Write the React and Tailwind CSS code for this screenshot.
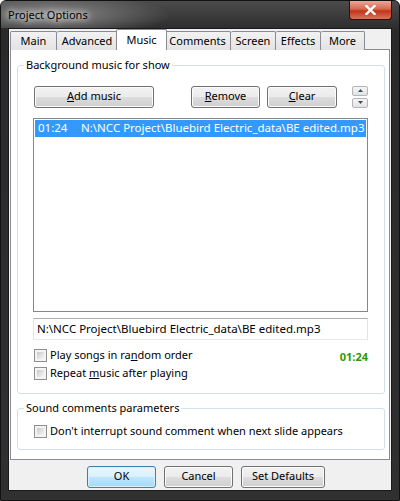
import React from "react";

const btn =
  "h-[22px] flex items-center justify-center rounded-[3px] border border-[#707070] bg-[linear-gradient(#f2f2f2_0%,#ebebeb_50%,#dddddd_50%,#cfcfcf_100%)] shadow-[inset_0_0_0_1px_#fcfcfc] text-[11px] text-black whitespace-nowrap";

const defBtn =
  "h-[22px] flex items-center justify-center rounded-[3px] border border-[#3c7fb1] bg-[linear-gradient(#eaf6fd_0%,#d9f0fc_50%,#bee6fd_50%,#a7d9f5_100%)] shadow-[inset_0_0_0_1px_#d6f1ff] text-[11px] text-black";

function Checkbox({ children }) {
  return (
    <div className="flex items-center gap-[3px] h-[18px] whitespace-nowrap">
      <div className="w-[13px] h-[13px] border border-[#8e8f8f] bg-[#f4f4f4] p-[2px]">
        <div className="w-full h-full bg-[linear-gradient(135deg,#cbcbcb,#f6f6f6)]" />
      </div>
      <span className="text-[11px] text-black">{children}</span>
    </div>
  );
}

function Tab({ label, w, active }) {
  if (active) {
    return (
      <div
        className={`${w} h-[21px] -mx-[2px] z-10 bg-white border border-[#898c95] border-b-0 rounded-t-[2px] flex items-start justify-center pt-[2px] text-[11px] text-black`}
      >
        {label}
      </div>
    );
  }
  return (
    <div
      className={`${w} h-[19px] mt-[2px] bg-[linear-gradient(#f2f2f2,#e3e3e3)] border border-[#898c95] border-b-0 border-l-0 first:border-l rounded-t-[2px] flex items-center justify-center text-[11px] text-black`}
    >
      {label}
    </div>
  );
}

export default function App() {
  return (
    <div className="w-[400px] h-[501px] font-['Noto_Sans',sans-serif] bg-[linear-gradient(#4c4c4c,#2a2a2a_30px,#303030)] rounded-t-[6px] flex flex-col border border-[#111]">
      {/* title bar */}
      <div className="h-[27px] flex items-start justify-between bg-[radial-gradient(ellipse_120px_22px_at_50px_14px,#8a8a8a,transparent)]">
        <div className="pl-[7px] pt-[6px] text-[11px] text-black [text-shadow:0_0_6px_#fff,0_0_10px_#fff]">
          Project Options
        </div>
        <div className="mr-[7px] w-[43px] h-[19px] rounded-b-[4px] border border-[#3a0d04] border-t-0 bg-[linear-gradient(#e9a899,#d7684d_45%,#c0341b_55%,#d9745a)] flex items-center justify-center">
          <svg width="11" height="10" viewBox="0 0 11 10">
            <path d="M1.5 1 L9.5 9 M9.5 1 L1.5 9" stroke="#fff" strokeWidth="2.4" strokeLinecap="square" />
          </svg>
        </div>
      </div>

      {/* client area */}
      <div className="flex-1 mx-[7px] mb-[9px] bg-[#f0f0f0] border border-[#1a1a1a] flex flex-col">
        {/* tabs */}
        <div className="flex pl-[1px] h-[20px] items-start relative z-10">
          <Tab label="Main" w="w-[47px]" />
          <Tab label="Advanced" w="w-[61px]" />
          <Tab label="Music" w="w-[51px]" active />
          <Tab label="Comments" w="w-[66px]" />
          <Tab label="Screen" w="w-[45px]" />
          <Tab label="Effects" w="w-[45px]" />
          <Tab label="More" w="w-[44px]" />
        </div>

        {/* panel */}
        <div className="mx-[1px] h-[411px] bg-white border border-[#898c95] flex flex-col px-[6px]">
          <fieldset className="mt-[7px] w-[368px] h-[337px] border border-[#d5dfe5] rounded-[3px] px-[6px]">
            <legend className="px-[2px] text-[11px] text-black">Background music for show</legend>
            <div className="pl-[10px] pr-[6px] pt-[12px] flex flex-col">
              <div className="flex items-center">
                <div className={`${btn} w-[120px]`}>
                  <span><u>A</u>dd music</span>
                </div>
                <div className={`${btn} w-[69px] ml-[37px]`}>
                  <span><u>R</u>emove</span>
                </div>
                <div className={`${btn} w-[70px] ml-[7px]`}>
                  <span><u>C</u>lear</span>
                </div>
                <div className="ml-[15px] flex flex-col gap-[2px]">
                  <div className="w-[16px] h-[10px] border border-[#b5b5b5] rounded-[2px] bg-[linear-gradient(#f6f6f6,#e2e2e2)] flex items-center justify-center">
                    <svg width="5" height="3" viewBox="0 0 5 3"><path d="M0 3 L2.5 0 L5 3 Z" fill="#3c4a66" /></svg>
                  </div>
                  <div className="w-[16px] h-[10px] border border-[#b5b5b5] rounded-[2px] bg-[linear-gradient(#f6f6f6,#e2e2e2)] flex items-center justify-center">
                    <svg width="5" height="3" viewBox="0 0 5 3"><path d="M0 0 L2.5 3 L5 0 Z" fill="#3c4a66" /></svg>
                  </div>
                </div>
              </div>

              <div className="mt-[10px] -ml-[1px] w-[335px] h-[194px] border border-[#828790] bg-white p-[1px]">
                <div className="h-[17px] bg-[#3399ff] flex items-center text-[11.5px] text-white whitespace-nowrap overflow-hidden">
                  <span className="pl-[3px] w-[46px] shrink-0">01:24</span>
                  <span>N:\NCC Project\Bluebird Electric_data\BE edited.mp3</span>
                </div>
              </div>

              <div className="mt-[6px] -ml-[1px] w-[335px] h-[22px] border border-[#abadb3] border-b-[#e3e9ef] border-x-[#e2e3ea] bg-white flex items-center pl-[3px] text-[11.5px] text-black whitespace-nowrap">
                N:\NCC Project\Bluebird Electric_data\BE edited.mp3
              </div>

              <div className="mt-[7px] flex items-start justify-between w-[334px]">
                <div className="flex flex-col">
                  <Checkbox>
                    Play songs in ra<u>n</u>dom order
                  </Checkbox>
                  <Checkbox>
                    Repeat <u>m</u>usic after playing
                  </Checkbox>
                </div>
                <span className="text-[11px] font-bold text-[#2f9a00] pt-[2px]">01:24</span>
              </div>
            </div>
          </fieldset>

          <fieldset className="mt-[6px] w-[368px] h-[50px] border border-[#d5dfe5] rounded-[3px] px-[6px]">
            <legend className="px-[2px] text-[11px] text-black">Sound comments parameters</legend>
            <div className="pl-[10px] pt-[6px]">
              <Checkbox>Don't interrupt sound comment when next slide appears</Checkbox>
            </div>
          </fieldset>
        </div>

        {/* bottom buttons */}
        <div className="flex-1 flex items-center pt-[3px] pl-[78px] gap-[8px]">
          <div className={`${defBtn} w-[69px]`}>OK</div>
          <div className={`${btn} w-[69px]`}>Cancel</div>
          <div className={`${btn} w-[84px]`}>Set Defaults</div>
        </div>
      </div>
    </div>
  );
}
